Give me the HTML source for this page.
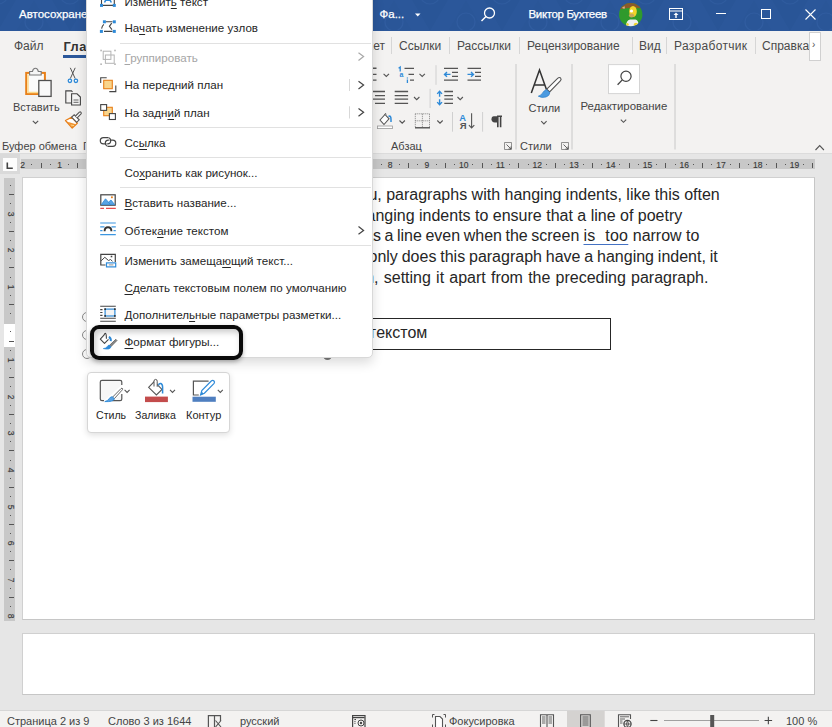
<!DOCTYPE html>
<html><head><meta charset="utf-8">
<style>
*{margin:0;padding:0;box-sizing:border-box}
html,body{width:832px;height:727px;overflow:hidden;background:#e6e6e6;font-family:"Liberation Sans",sans-serif;position:relative}
.a{position:absolute;white-space:nowrap}
#title{left:0;top:0;width:832px;height:30.6px;background:#2b579a;overflow:hidden}
#ribbon{left:0;top:30.6px;width:832px;height:122.4px;background:#f3f2f1}
#rulerband{left:0;top:153px;width:832px;height:25px;background:#e6e6e6;border-top:1px solid #dcdcdc}
.tab{font-size:12px;color:#4a4a4a;top:39px}
.tsep{top:37px;width:1px;height:17px;background:#d6d6d6}
.gsep{top:64px;width:1px;height:85px;background:#c8c8c8}
.glabel{font-size:11px;color:#444;top:140px}
.page{background:#fff;border:1px solid #d0d0d0;border-right-color:#c6c6c6;border-bottom-color:#c6c6c6}
.doc{font-size:16px;color:#262626;left:0;}
#status{left:0;top:710px;width:832px;height:17px;background:#f3f2f1;border-top:1.5px solid #d6d6d6}
.st{font-size:11px;color:#444;top:715px}
#menu{left:86px;top:-12px;width:286.5px;height:369.5px;background:#fff;border:1.5px solid #d8d8d8;border-radius:5px;box-shadow:0 5px 12px rgba(0,0,0,0.14)}
.mi{font-size:11.6px;color:#262626}
.mi u{text-decoration-thickness:1px;text-underline-offset:1.5px}
.msep{left:33px;width:251px;height:1px;background:#e1e1e1}
.chev{left:270px;width:8px;height:8px}
.rn{font-size:8.5px;color:#3a3a3a;line-height:10px;-webkit-text-stroke:0.15px #3a3a3a}
.rd{width:1px;height:1px;background:#555}
.rb{width:1px;height:5px;background:#555}
.rbv{width:5px;height:1px;background:#555}
</style></head><body>

<!-- TITLE BAR -->
<div id="title" class="a">
<svg class="a" style="left:0;top:0" width="832" height="30" viewBox="0 0 832 30">
 <defs>
  <pattern id="hx" x="-20" y="0" width="72" height="62" patternUnits="userSpaceOnUse">
   <path d="M0 0 L18 31 L36 0 Z" fill="#24508f" opacity="0.55"/>
   <path d="M36 31 L54 0 L72 31 Z" fill="#24508f" opacity="0.35"/>
   <circle cx="54" cy="22" r="9" fill="none" stroke="#3a68ad" stroke-width="1.2" opacity="0.6"/>
   <circle cx="18" cy="-6" r="10" fill="none" stroke="#3a68ad" stroke-width="1.2" opacity="0.5"/>
  </pattern>
  <clipPath id="av"><circle cx="630.7" cy="14.6" r="11.7"/></clipPath>
 </defs>
 <rect x="0" y="0" width="832" height="30" fill="url(#hx)" opacity="0.6"/>
 <g clip-path="url(#av)">
  <rect x="618" y="2" width="26" height="26" fill="#2f9a2c"/>
  <path d="M618 2 H644 V9 Q638 7.5 634 8.5 Q626 7 618 10 Z" fill="#8a5a2a"/>
  <path d="M622 8 Q623 6 625 6.5 L624.5 9 Z" fill="#d8b080"/>
  <ellipse cx="633" cy="11.5" rx="3.8" ry="5.5" fill="#f1d42a"/>
  <circle cx="631.5" cy="11" r="1.6" fill="#fff"/>
  <ellipse cx="631.5" cy="15.5" rx="2.6" ry="2" fill="#c8a85a"/>
  <path d="M626 27 Q626 20 630 19.5 H635.5 Q639 20 638.5 27 Z" fill="#f0f0f0"/>
  <ellipse cx="636" cy="24.5" rx="2.2" ry="1.8" fill="#f1d42a"/>
  <ellipse cx="627.5" cy="24.5" rx="1.2" ry="1.5" fill="#f1d42a"/>
 </g>
</svg>
  <div class="a" style="left:19px;top:8px;font-size:11.5px;color:#fff;-webkit-text-stroke:0.25px #fff">Автосохранение</div>
  <div class="a" style="left:379.5px;top:8px;font-size:11.5px;color:#fff;-webkit-text-stroke:0.25px #fff">Фа...</div>
  <svg class="a" style="left:414px;top:12px" width="8" height="6" viewBox="0 0 8 6"><path d="M1 1.5 H6.5 L3.75 4.5 Z" fill="#fff"/></svg>
  <svg class="a" style="left:478px;top:5px" width="20" height="20" viewBox="0 0 20 20"><circle cx="11.5" cy="8" r="5" fill="none" stroke="#fff" stroke-width="1.3"/><line x1="8" y1="11.5" x2="3.5" y2="16" stroke="#fff" stroke-width="1.4"/></svg>
  <div class="a" style="left:528.5px;top:8px;font-size:11.5px;color:#fff;-webkit-text-stroke:0.25px #fff;letter-spacing:-0.35px">Виктор Бухтеев</div>
  <svg class="a" style="left:669px;top:8px" width="14" height="12" viewBox="0 0 14 12"><rect x="0.5" y="0.5" width="13" height="11" fill="none" stroke="#fff"/><line x1="0.5" y1="3" x2="13.5" y2="3" stroke="#fff"/><path d="M7 4.5 L4.5 7 H6.3 V10 H7.7 V7 H9.5Z" fill="#fff"/></svg>
  <div class="a" style="left:716px;top:13px;width:10px;height:1px;background:#fff"></div>
  <div class="a" style="left:761px;top:9px;width:10px;height:10px;border:1px solid #fff"></div>
  <svg class="a" style="left:805px;top:9px" width="11" height="11" viewBox="0 0 11 11"><path d="M0.5 0.5 L10.5 10.5 M10.5 0.5 L0.5 10.5" stroke="#fff" stroke-width="1.1"/></svg>
</div>

<!-- RIBBON -->
<div id="ribbon" class="a"></div>
<div class="a tab" style="left:14px">Файл</div>
<div class="a tab" style="left:63.5px;top:38.6px;font-weight:bold;color:#333;letter-spacing:0.5px;font-size:12.8px">Главная</div>
<div class="a" style="left:63px;top:55px;width:50px;height:3px;background:#2b579a"></div>
<div class="a tab" style="left:351px">Макет</div>
<div class="a tsep" style="left:391px"></div>
<div class="a tab" style="left:399px">Ссылки</div>
<div class="a tsep" style="left:449px"></div>
<div class="a tab" style="left:457px">Рассылки</div>
<div class="a tsep" style="left:519px"></div>
<div class="a tab" style="left:527px">Рецензирование</div>
<div class="a tsep" style="left:632px"></div>
<div class="a tab" style="left:639px">Вид</div>
<div class="a tsep" style="left:666px"></div>
<div class="a tab" style="left:674px;letter-spacing:0.3px">Разработчик</div>
<div class="a tsep" style="left:755px"></div>
<div class="a tab" style="left:762px">Справка</div>
<div class="a" style="left:809px;top:32px;width:12px;height:29px;background:#fff;border:1px solid #d0d0d0"></div>
<div class="a" style="left:812px;top:39px;font-size:10px;color:#555">&#8250;</div>

<div class="a" style="left:13px;top:101px;font-size:11px;color:#444">Вставить</div>
<div class="a" style="left:528.5px;top:101.5px;font-size:11px;color:#444">Стили</div>
<div class="a" style="left:580.5px;top:99.5px;font-size:11.4px;color:#444">Редактирование</div>
<div class="a glabel" style="left:83px">Г</div>
<div class="a glabel" style="left:2px">Буфер обмена</div>
<div class="a glabel" style="left:391px">Абзац</div>
<div class="a glabel" style="left:520px">Стили</div>

<!-- RIBBON ICONS -->
<svg class="a" style="left:0;top:0" width="832" height="160" viewBox="0 0 832 160">
 <g fill="none" stroke-linecap="butt">
  <!-- paste -->
  <rect x="26.2" y="72.9" width="18.7" height="21.1" fill="#fbfbfb" stroke="#e8801a" stroke-width="2"/>
  <path d="M28 74.5 V92.5 H43" stroke="#fcd98a" stroke-width="1.4"/>
  <path d="M29.6 75 V71.5 H32.5 Q33 68.3 35.4 68.3 Q37.8 68.3 38.3 71.5 H41.2 V75 Z" fill="#f6f6f6" stroke="#7a7a7a" stroke-width="1.1"/>
  <rect x="38.8" y="80.5" width="12.3" height="15.9" fill="#f9f9f9" stroke="#505050" stroke-width="1.3"/>
  <!-- scissors -->
  <path d="M70.3 67.8 L75.2 78.6 M75.2 67.8 L70.3 78.6" stroke="#555" stroke-width="1"/>
  <circle cx="69.9" cy="80.8" r="1.7" fill="#fff" stroke="#2e8ad8" stroke-width="1.3"/>
  <circle cx="75.9" cy="80.8" r="1.7" fill="#fff" stroke="#2e8ad8" stroke-width="1.3"/>
  <!-- copy -->
  <path d="M71.5 103 H65.8 V90.9 H71.5 L72.5 92" stroke="#444" stroke-width="1.1"/>
  <path d="M71.6 93.8 H77 L80.4 97 V105 H71.6 Z" fill="#f6f6f6" stroke="#444" stroke-width="1.1"/>
  <path d="M73.5 100 H78.5 M73.5 102.3 H78.5" stroke="#555" stroke-width="0.9"/>
  <!-- format painter -->
  <path d="M65.5 120.5 L71.8 117.2 L77.3 123.2 L72.2 128 Z" fill="#fff" stroke="#e8801a" stroke-width="1.3" stroke-linejoin="round"/>
  <path d="M67.5 121.8 L76 124.2 L72.3 127.3 Z" fill="#f0922e"/>
  <path d="M70.8 125 L74 125.6" stroke="#fcd98a" stroke-width="1"/>
  <path d="M71.6 117.2 L74.2 114.8 L79.2 119.8 L76.7 122.3 Z" fill="#fff" stroke="#555" stroke-width="1.1"/>
  <path d="M75.5 116 L79.4 112.2 Q80.2 111.5 81 112.3 Q81.7 113.1 81 113.9 L77.2 117.8" fill="#fff" stroke="#555" stroke-width="1.1"/>
  <!-- Paragraph row1 -->
  <path d="M372 68.3 H376.5 M372 74.4 H376.5 M372 80.1 H376.5" stroke="#555" stroke-width="1.4"/>
  <path d="M383.6 73.8 L386.3 76.5 L389 73.8" stroke="#555" stroke-width="1.1"/>
  <path d="M398.6 68.2 L400.2 67 V71.6" stroke="#2e8ad8" stroke-width="1.3" fill="none"/>
  <text x="399.6" y="77.2" font-family="Liberation Sans" font-weight="bold" font-size="7" fill="#2e8ad8">a</text>
  <path d="M407.4 79.6 V83 M407.4 77.6 V78.6" stroke="#2e8ad8" stroke-width="1.3"/>
  <path d="M404.5 68.3 H414 M408.5 74.4 H414 M410 80.1 H414" stroke="#555" stroke-width="1.2"/>
  <path d="M419.5 73.8 L422.2 76.5 L424.9 73.8" stroke="#555" stroke-width="1.1"/>
  <path d="M436 65.2 V84.8" stroke="#d0d0d0" stroke-width="1"/>
  <path d="M444 68.3 H458 M452 72.4 H458 M452 76.3 H458 M444 80.1 H458" stroke="#555" stroke-width="1.2"/>
  <path d="M450.5 74.4 H444.5 M447 72 L444.5 74.4 L447 76.8" stroke="#2e8ad8" stroke-width="1.4"/>
  <path d="M467.5 68.3 H481 M475 72.4 H481 M475 76.3 H481 M467.5 80.1 H481" stroke="#555" stroke-width="1.2"/>
  <path d="M467.5 74.4 H473.5 M471 72 L473.5 74.4 L471 76.8" stroke="#2e8ad8" stroke-width="1.4"/>
  <!-- row2 -->
  <path d="M372 91.5 H385 M375 95.6 H385 M372 99.2 H385 M375 103.3 H385" stroke="#555" stroke-width="1.3"/>
  <path d="M394.7 91.5 H408.1 M394.7 95.6 H408.1 M394.7 99.2 H408.1 M394.7 103.3 H408.1" stroke="#555" stroke-width="1.3"/>
  <path d="M414 97 L416.7 99.7 L419.4 97" stroke="#555" stroke-width="1.1"/>
  <path d="M430.1 88.9 V108" stroke="#d0d0d0" stroke-width="1"/>
  <path d="M439.6 91.5 V96.8 M439.6 99.3 V104.5 M437.2 93.9 L439.6 91.3 L442 93.9 M437.2 102.1 L439.6 104.7 L442 102.1" stroke="#2e8ad8" stroke-width="1.4"/>
  <path d="M444.3 91.5 H453 M444.3 95.6 H453 M444.3 99.2 H453 M444.3 103.3 H453" stroke="#555" stroke-width="1.3"/>
  <path d="M457.5 97 L460.2 99.7 L462.9 97" stroke="#555" stroke-width="1.1"/>
  <!-- row3 -->
  <path d="M380 120 L385 114.5 L389 118.8 L384 124.5 Z" fill="#fff" stroke="#555" stroke-width="1.1"/>
  <path d="M384.5 114.5 Q385.5 112.6 386.4 114.2" stroke="#555" stroke-width="1"/>
  <path d="M388.5 116.5 Q391 115 391 119.5 V122" stroke="#2e8ad8" stroke-width="1.5"/>
  <rect x="377.5" y="126" width="15" height="2.6" fill="#fff" stroke="#999" stroke-width="0.8"/>
  <path d="M399.5 120.5 L402.2 123.2 L404.9 120.5" stroke="#555" stroke-width="1.1"/>
  <path d="M415.3 113.8 H429.5 M415.3 113.8 V127.5 M429.5 113.8 V127.5 M422.4 113.8 V127.5 M415.3 120.8 H429.5" stroke="#777" stroke-width="0.9" stroke-dasharray="1 1"/>
  <path d="M415 127.8 H430" stroke="#444" stroke-width="1.3"/>
  <path d="M437.3 120.5 L440 123.2 L442.7 120.5" stroke="#555" stroke-width="1.1"/>
  <path d="M452.5 112 V131.7" stroke="#d0d0d0" stroke-width="1"/>
  <text x="459.3" y="120.5" font-family="Liberation Sans" font-weight="bold" font-size="9.3" fill="#2e8ad8">A</text>
  <text x="459.8" y="128.6" font-family="Liberation Sans" font-weight="bold" font-size="9.5" fill="#555">Я</text>
  <path d="M471.6 113.2 V128 M468.9 125.2 L471.6 128 L474.3 125.2" stroke="#555" stroke-width="1.1"/>
  <path d="M482.6 112 V131.7" stroke="#d0d0d0" stroke-width="1"/>
  <path d="M497.5 116.2 H493.8 Q491.5 116.2 491.5 119.3 Q491.5 122.4 494.8 122.4 H497.5 Z" fill="#444"/><path d="M497.8 116.2 V127.2 M500.6 116.2 V127.2 M497 116.2 H502" stroke="#444" stroke-width="1.6" fill="none"/>
  <path d="M516 64 V149.5 M572 64 V149.5 M675 64 V149.5" stroke="#c8c8c8" stroke-width="1"/>
  <!-- launchers -->
  <path d="M504.5 142.5 H511.5 V149.5 H504.5 Z" stroke="#777" stroke-width="0.8"/>
  <path d="M506.5 144.5 L511 149 M511 146.5 V149 H508.5" stroke="#555" stroke-width="0.9"/>
  <path d="M561.5 142.5 H568.5 V149.5 H561.5 Z" stroke="#777" stroke-width="0.8"/>
  <path d="M563.5 144.5 L568 149 M568 146.5 V149 H565.5" stroke="#555" stroke-width="0.9"/>
  <!-- styles A -->
  <path d="M531.3 93 L539.5 70 L547.7 93 M534 85 H545" stroke="#333" stroke-width="1.5"/>
  <path d="M546.8 89.2 L557.6 78.3 Q559.4 76.8 560.6 78 Q561.8 79.3 560.3 81 L549.6 92 Z" fill="#fff" stroke="#555" stroke-width="1.1"/>
  <path d="M538.3 96.2 Q540.8 95.6 542.2 93.4 Q543.8 90.5 546.5 89.6 L549.9 92.6 Q549.5 96 546 97 Q541.8 98.2 538.3 96.2 Z" fill="#4a9ae0" stroke="#2e7fc8" stroke-width="0.7"/>
  <path d="M541.2 121.2 L543.9 123.9 L546.6 121.2" stroke="#555" stroke-width="1.1"/>
  <!-- editing -->
  <rect x="608.5" y="64.6" width="31" height="29" fill="#fff" stroke="#d4d4d4" stroke-width="1"/>
  <circle cx="626" cy="76.2" r="5.1" stroke="#444" stroke-width="1.2"/>
  <path d="M622.3 79.9 L617.6 84.8" stroke="#444" stroke-width="1.3"/>
  <path d="M620.8 119.6 L623.5 122.3 L626.2 119.6" stroke="#555" stroke-width="1.1"/>
  <path d="M32.8 120.8 L35.5 123.5 L38.2 120.8" stroke="#555" stroke-width="1.1"/>
  <path d="M815.5 150 L819.7 145.5 L823.9 150" stroke="#555" stroke-width="1.1"/>
 </g>
</svg>

<!-- RULER -->
<div id="rulerband" class="a"></div>
<div class="a" style="left:0;top:154.3px;width:20px;height:20px;background:#dadada"></div>
<div class="a" style="left:2.7px;top:158px;width:14px;height:13px;background:#fdfdfd"></div>
<svg class="a" style="left:0;top:150px" width="20" height="25" viewBox="0 150 20 25"><path d="M7.3 162.5 V168.3 H12.8" fill="none" stroke="#444" stroke-width="1.6"/></svg>
<div class="a" style="left:21px;top:159px;width:794px;height:10px;background:#c8c8c8"></div>
<!--HR-->
<div class="a rn" style="left:12.7px;top:159.5px;width:20px;text-align:center">2</div>
<div class="a rd" style="left:31.4px;top:164px"></div>
<div class="a rb" style="left:40.6px;top:163px"></div>
<div class="a rd" style="left:49.8px;top:164px"></div>
<div class="a rn" style="left:49.5px;top:159.5px;width:20px;text-align:center">1</div>
<div class="a rd" style="left:68.1px;top:164px"></div>
<div class="a rb" style="left:77.3px;top:163px"></div>
<div class="a rd" style="left:86.5px;top:164px"></div>
<div class="a rd" style="left:104.9px;top:164px"></div>
<div class="a rb" style="left:114.1px;top:163px"></div>
<div class="a rd" style="left:123.3px;top:164px"></div>
<div class="a rn" style="left:122.9px;top:159.5px;width:20px;text-align:center">1</div>
<div class="a rd" style="left:141.6px;top:164px"></div>
<div class="a rb" style="left:150.8px;top:163px"></div>
<div class="a rd" style="left:160.0px;top:164px"></div>
<div class="a rn" style="left:159.7px;top:159.5px;width:20px;text-align:center">2</div>
<div class="a rd" style="left:178.4px;top:164px"></div>
<div class="a rb" style="left:187.6px;top:163px"></div>
<div class="a rd" style="left:196.8px;top:164px"></div>
<div class="a rn" style="left:196.4px;top:159.5px;width:20px;text-align:center">3</div>
<div class="a rd" style="left:215.1px;top:164px"></div>
<div class="a rb" style="left:224.3px;top:163px"></div>
<div class="a rd" style="left:233.5px;top:164px"></div>
<div class="a rn" style="left:233.2px;top:159.5px;width:20px;text-align:center">4</div>
<div class="a rd" style="left:251.9px;top:164px"></div>
<div class="a rb" style="left:261.1px;top:163px"></div>
<div class="a rd" style="left:270.3px;top:164px"></div>
<div class="a rn" style="left:269.9px;top:159.5px;width:20px;text-align:center">5</div>
<div class="a rd" style="left:288.6px;top:164px"></div>
<div class="a rb" style="left:297.8px;top:163px"></div>
<div class="a rd" style="left:307.0px;top:164px"></div>
<div class="a rn" style="left:306.7px;top:159.5px;width:20px;text-align:center">6</div>
<div class="a rd" style="left:325.4px;top:164px"></div>
<div class="a rb" style="left:334.6px;top:163px"></div>
<div class="a rd" style="left:343.8px;top:164px"></div>
<div class="a rn" style="left:343.4px;top:159.5px;width:20px;text-align:center">7</div>
<div class="a rd" style="left:362.1px;top:164px"></div>
<div class="a rb" style="left:371.3px;top:163px"></div>
<div class="a rd" style="left:380.5px;top:164px"></div>
<div class="a rn" style="left:380.2px;top:159.5px;width:20px;text-align:center">8</div>
<div class="a rd" style="left:398.9px;top:164px"></div>
<div class="a rb" style="left:408.1px;top:163px"></div>
<div class="a rd" style="left:417.3px;top:164px"></div>
<div class="a rn" style="left:416.9px;top:159.5px;width:20px;text-align:center">9</div>
<div class="a rd" style="left:435.6px;top:164px"></div>
<div class="a rb" style="left:444.8px;top:163px"></div>
<div class="a rd" style="left:454.0px;top:164px"></div>
<div class="a rn" style="left:453.7px;top:159.5px;width:20px;text-align:center">10</div>
<div class="a rd" style="left:472.4px;top:164px"></div>
<div class="a rb" style="left:481.6px;top:163px"></div>
<div class="a rd" style="left:490.8px;top:164px"></div>
<div class="a rn" style="left:490.4px;top:159.5px;width:20px;text-align:center">11</div>
<div class="a rd" style="left:509.1px;top:164px"></div>
<div class="a rb" style="left:518.3px;top:163px"></div>
<div class="a rd" style="left:527.5px;top:164px"></div>
<div class="a rn" style="left:527.2px;top:159.5px;width:20px;text-align:center">12</div>
<div class="a rd" style="left:545.9px;top:164px"></div>
<div class="a rb" style="left:555.1px;top:163px"></div>
<div class="a rd" style="left:564.3px;top:164px"></div>
<div class="a rn" style="left:564.0px;top:159.5px;width:20px;text-align:center">13</div>
<div class="a rd" style="left:582.6px;top:164px"></div>
<div class="a rb" style="left:591.8px;top:163px"></div>
<div class="a rd" style="left:601.0px;top:164px"></div>
<div class="a rn" style="left:600.7px;top:159.5px;width:20px;text-align:center">14</div>
<div class="a rd" style="left:619.4px;top:164px"></div>
<div class="a rb" style="left:628.6px;top:163px"></div>
<div class="a rd" style="left:637.8px;top:164px"></div>
<div class="a rn" style="left:637.5px;top:159.5px;width:20px;text-align:center">15</div>
<div class="a rd" style="left:656.1px;top:164px"></div>
<div class="a rb" style="left:665.3px;top:163px"></div>
<div class="a rd" style="left:674.5px;top:164px"></div>
<div class="a rn" style="left:674.2px;top:159.5px;width:20px;text-align:center">16</div>
<div class="a rd" style="left:692.9px;top:164px"></div>
<div class="a rb" style="left:702.1px;top:163px"></div>
<div class="a rd" style="left:711.3px;top:164px"></div>
<div class="a rn" style="left:711.0px;top:159.5px;width:20px;text-align:center">17</div>
<div class="a rd" style="left:729.6px;top:164px"></div>
<div class="a rb" style="left:738.8px;top:163px"></div>
<div class="a rd" style="left:748.0px;top:164px"></div>
<div class="a rn" style="left:747.7px;top:159.5px;width:20px;text-align:center">18</div>
<div class="a rd" style="left:766.4px;top:164px"></div>
<div class="a rb" style="left:775.6px;top:163px"></div>
<div class="a rd" style="left:784.8px;top:164px"></div>
<div class="a rn" style="left:784.5px;top:159.5px;width:20px;text-align:center">19</div>
<div class="a rd" style="left:803.1px;top:164px"></div>
<div class="a rb" style="left:812.3px;top:163px"></div>
<!--/HR-->

<!-- PAGES -->
<div class="a" style="left:4px;top:178px;width:11px;height:443px;background:#c8c8c8"></div>
<div class="a" style="left:4px;top:324px;width:11px;height:23px;background:#fff"></div>
<!--VR-->
<div class="a rd" style="left:10px;top:185.1px"></div>
<div class="a rbv" style="left:9px;top:194.2px"></div>
<div class="a rd" style="left:10px;top:203.4px"></div>
<div class="a rn" style="left:0px;top:207.7px;width:20px;height:12px;text-align:center;transform:rotate(90deg)">3</div>
<div class="a rd" style="left:10px;top:221.7px"></div>
<div class="a rbv" style="left:9px;top:230.8px"></div>
<div class="a rd" style="left:10px;top:239.9px"></div>
<div class="a rn" style="left:0px;top:244.3px;width:20px;height:12px;text-align:center;transform:rotate(90deg)">2</div>
<div class="a rd" style="left:10px;top:258.2px"></div>
<div class="a rbv" style="left:9px;top:267.4px"></div>
<div class="a rd" style="left:10px;top:276.6px"></div>
<div class="a rn" style="left:0px;top:280.9px;width:20px;height:12px;text-align:center;transform:rotate(90deg)">1</div>
<div class="a rd" style="left:10px;top:294.8px"></div>
<div class="a rbv" style="left:9px;top:304.0px"></div>
<div class="a rd" style="left:10px;top:313.1px"></div>
<div class="a rd" style="left:10px;top:331.4px"></div>
<div class="a rbv" style="left:9px;top:340.6px"></div>
<div class="a rd" style="left:10px;top:349.8px"></div>
<div class="a rn" style="left:0px;top:354.1px;width:20px;height:12px;text-align:center;transform:rotate(90deg)">1</div>
<div class="a rd" style="left:10px;top:368.1px"></div>
<div class="a rbv" style="left:9px;top:377.2px"></div>
<div class="a rd" style="left:10px;top:386.4px"></div>
<div class="a rn" style="left:0px;top:390.7px;width:20px;height:12px;text-align:center;transform:rotate(90deg)">2</div>
<div class="a rd" style="left:10px;top:404.6px"></div>
<div class="a rbv" style="left:9px;top:413.8px"></div>
<div class="a rd" style="left:10px;top:422.9px"></div>
<div class="a rn" style="left:0px;top:427.3px;width:20px;height:12px;text-align:center;transform:rotate(90deg)">3</div>
<div class="a rd" style="left:10px;top:441.2px"></div>
<div class="a rbv" style="left:9px;top:450.4px"></div>
<div class="a rd" style="left:10px;top:459.6px"></div>
<div class="a rn" style="left:0px;top:463.9px;width:20px;height:12px;text-align:center;transform:rotate(90deg)">4</div>
<div class="a rd" style="left:10px;top:477.9px"></div>
<div class="a rbv" style="left:9px;top:487.0px"></div>
<div class="a rd" style="left:10px;top:496.2px"></div>
<div class="a rn" style="left:0px;top:500.5px;width:20px;height:12px;text-align:center;transform:rotate(90deg)">5</div>
<div class="a rd" style="left:10px;top:514.5px"></div>
<div class="a rbv" style="left:9px;top:523.6px"></div>
<div class="a rd" style="left:10px;top:532.8px"></div>
<div class="a rn" style="left:0px;top:537.1px;width:20px;height:12px;text-align:center;transform:rotate(90deg)">6</div>
<div class="a rd" style="left:10px;top:551.1px"></div>
<div class="a rbv" style="left:9px;top:560.2px"></div>
<div class="a rd" style="left:10px;top:569.4px"></div>
<div class="a rn" style="left:0px;top:573.7px;width:20px;height:12px;text-align:center;transform:rotate(90deg)">7</div>
<div class="a rd" style="left:10px;top:587.6px"></div>
<div class="a rbv" style="left:9px;top:596.8px"></div>
<div class="a rd" style="left:10px;top:606.0px"></div>
<div class="a rn" style="left:0px;top:610.3px;width:20px;height:12px;text-align:center;transform:rotate(90deg)">8</div>
<!--/VR-->
<div class="a page" style="left:22px;top:177px;width:793px;height:443px"></div>
<div class="a page" style="left:22px;top:633px;width:793px;height:62px"></div>

<!-- DOC TEXT -->
<div class="a doc" style="left:351.5px;top:186.4px">you, paragraphs with hanging indents, like this often</div>
<div class="a doc" style="left:357.6px;top:206.6px">hanging indents to ensure that a line of poetry</div>
<div class="a doc" style="left:364.1px;top:227px;word-spacing:-0.9px">as a line even when the screen</div>
<div class="a doc" style="left:583.5px;top:227px"><span style="text-decoration:underline;text-decoration-color:#4472c4;text-underline-offset:2.5px;letter-spacing:0.3px">is&nbsp; too</span> narrow to</div>
<div class="a doc" style="left:368.5px;top:248.4px;word-spacing:-0.6px">only does this paragraph have a hanging indent, it</div>
<div class="a doc" style="left:325.2px;top:269.1px;word-spacing:0.75px">margin, setting it apart from the preceding paragraph.</div>
<div class="a" style="left:300px;top:317.8px;width:311.2px;height:32px;border:1.5px solid #262626;background:#fff"></div>
<div class="a doc" style="left:300px;top:323.7px;width:76.2px;text-align:right">с т</div>
<div class="a doc" style="left:376.2px;top:323.7px">екстом</div>

<!-- STATUS -->
<div id="status" class="a"></div>
<div class="a st" style="left:7px">Страница 2 из 9</div>
<div class="a st" style="left:108px">Слово 3 из 1644</div>
<div class="a st" style="left:240px">русский</div>
<div class="a st" style="left:449px">Фокусировка</div>
<svg class="a" style="left:0;top:706px" width="832" height="21" viewBox="0 706 832 21">
 <g fill="none">
  <path d="M214.5 727 V715.6 H208.4 V727" stroke="#555" stroke-width="1.2"/>
  <path d="M214.5 715.6 H220.5 V721" stroke="#555" stroke-width="1.2"/>
  <path d="M215.5 720.5 L221 727 M221 720.5 L215.5 727" stroke="#555" stroke-width="1.1"/>
  <rect x="352.6" y="715.6" width="12.4" height="12" stroke="#444" stroke-width="1.2"/>
  <path d="M353 717.6 H364.6" stroke="#444" stroke-width="1.2"/>
  <path d="M354.4 719.5 H356 M354.4 721.4 H355.5 M354.4 723.3 H355.5" stroke="#444" stroke-width="1"/>
  <circle cx="361" cy="723" r="3" fill="#f3f2f1" stroke="#444" stroke-width="1"/>
  <circle cx="361" cy="723" r="1.2" fill="#444"/>
  <path d="M432.5 717.5 V714.5 H434.5 M443.5 714.5 H445.5 V717.5 M432.5 724.5 V727 M445.5 724.5 V727" stroke="#555" stroke-width="1"/>
  <path d="M435.5 727 V716.5 H440 L442.5 719 V727" fill="#fff" stroke="#555" stroke-width="1.1"/>
  <rect x="567" y="710.8" width="37.7" height="17" fill="#d4d2d0"/>
  <path d="M540.5 727 V714.7 H546.5 L547 715.5 L547.5 714.7 H553.5 V727 M547 715.5 V727" stroke="#555" stroke-width="1.1"/>
  <path d="M542 717 H545.5 M542 719 H545.5 M542 721 H545.5 M542 723 H545.5 M548.5 717 H552 M548.5 719 H552 M548.5 721 H552 M548.5 723 H552" stroke="#555" stroke-width="0.9"/>
  <path d="M580.6 727 V714.8 H590.3 V727" stroke="#555" stroke-width="1.1"/>
  <path d="M582.5 717 H588.5 M582.5 719 H588.5 M582.5 721 H588.5 M582.5 723 H588.5 M582.5 725 H588.5" stroke="#555" stroke-width="0.9"/>
  <path d="M618.5 727 V714.8 H630.5 V719" stroke="#555" stroke-width="1.1"/>
  <path d="M620 716.8 H629 M620 719 H625 M620 721 H622.5 M620 723 H622.5" stroke="#555" stroke-width="0.9"/>
  <circle cx="627.5" cy="724" r="3.6" fill="#f3f2f1" stroke="#444" stroke-width="1.2"/>
  <path d="M623.9 724 H631.1 M627.5 720.4 Q625.5 724 627.5 727.6 Q629.5 724 627.5 720.4" stroke="#444" stroke-width="0.8"/>
  <path d="M650.3 720.5 H657.5" stroke="#444" stroke-width="1.1"/>
  <path d="M664 720.5 H759" stroke="#a0a0a0" stroke-width="1"/>
  <rect x="710.2" y="715" width="4" height="12" fill="#555"/>
  <path d="M764.6 720.5 H772.1 M768.35 716.8 V724.2" stroke="#444" stroke-width="1.1"/>
 </g>
</svg>
<div class="a st" style="left:786px">100 %</div>

<!-- HANDLES -->
<div class="a" style="left:82px;top:312px;width:10px;height:10px;border-radius:50%;border:1.2px solid #8c8c8c;background:#fff"></div>
<div class="a" style="left:82px;top:330.4px;width:10px;height:10px;border-radius:50%;border:1.2px solid #8c8c8c;background:#fff"></div>
<div class="a" style="left:82px;top:348.8px;width:10px;height:10px;border-radius:50%;border:1.2px solid #8c8c8c;background:#fff"></div>
<div class="a" style="left:322.5px;top:350.5px;width:9px;height:9px;border-radius:50%;background:#7a7a7a"></div>
<!-- MINI TOOLBAR -->
<div class="a" style="left:87px;top:372px;width:143px;height:61px;background:#fff;border:1px solid #d6d6d6;border-radius:4px;box-shadow:0 2px 6px rgba(0,0,0,0.13)"></div>
<div class="a" style="left:96px;top:409px;font-size:10.6px;color:#262626">Стиль</div>
<div class="a" style="left:135px;top:409px;font-size:10.6px;color:#262626">Заливка</div>
<div class="a" style="left:186px;top:409px;font-size:11px;color:#262626">Контур</div>

<svg class="a" style="left:0;top:370px" width="240" height="40" viewBox="0 370 240 40">
 <g fill="none">
  <path d="M121.8 385 V382 Q121.8 380.3 120.1 380.3 H102 Q100.3 380.3 100.3 382 V399 Q100.3 400.7 102 400.7 H104 M112 400.7 H120.1 Q121.8 400.7 121.8 399 V394" fill="#f7f7f7" stroke="#555" stroke-width="1.2"/>
  <path d="M112.5 397.2 L121 388.6 Q122.2 387.6 122.6 388.6 Q122.9 389.4 122 390.2 L114.2 398.8 Z" fill="#fff" stroke="#555" stroke-width="0.9"/>
  <path d="M104.8 401.6 Q107.8 401 109.3 398.5 Q110.8 396 112.5 397.1 L114.3 398.8 Q113.5 402 104.8 401.6 Z" fill="#5ba2e2" stroke="#2e8ad8" stroke-width="0.9"/>
  <path d="M124.6 389.9 L127.1 392.4 L129.6 389.9" stroke="#555" stroke-width="1.1"/>
  <path d="M148.6 387.3 L154.2 381.6 L162 389.4 L156.4 395 Z" fill="#fff" stroke="#555" stroke-width="1.1"/>
  <path d="M154 386.5 V381.2 Q154 379.4 155.6 379.4 Q157.2 379.4 157.2 381.2 V386.8" fill="#fff" stroke="#555" stroke-width="1"/>
  <path d="M158.5 385.3 Q159 383.2 160.8 383.5 Q162.5 384 162.6 387 V393.6" stroke="#2e8ad8" stroke-width="1.5"/>
  <rect x="145" y="396.6" width="22.9" height="5.5" fill="#c34c4c"/>
  <path d="M170 389.9 L172.5 392.4 L175 389.9" stroke="#555" stroke-width="1.1"/>
  <path d="M208.6 381.2 H193.4 V395 H198.8" stroke="#555" stroke-width="1.2"/>
  <path d="M200.6 395 L201.8 390.5 L211.5 380.8 Q212.8 379.8 214 381 Q215 382.2 214.1 383.4 L204.4 393.2 Z" fill="#fff" stroke="#2e8ad8" stroke-width="1.2"/>
  <path d="M200.6 395 L201.6 391.5 L203.8 393.7 Z" fill="#2e8ad8"/>
  <rect x="192.5" y="396.7" width="23.3" height="5.1" fill="#4f7fc0"/>
  <path d="M217.8 389.9 L220.3 392.4 L222.8 389.9" stroke="#555" stroke-width="1.1"/>
 </g>
</svg>

<!-- CONTEXT MENU -->
<div id="menu" class="a"></div>
<!--MENUITEMS-->
<div class="a mi" style="left:124.5px;top:-5.1px">Изменит<u>ь</u> текст</div>
<div class="a mi" style="left:124.5px;top:20.9px">На<u>ч</u>ать изменение узлов</div>
<div class="a mi" style="left:124.5px;top:51.1px;color:#a6a6a6"><u>Г</u>руппировать</div>
<div class="a mi" style="left:124.5px;top:78.4px">На передний план</div>
<div class="a mi" style="left:124.5px;top:105.9px">На задн<u>и</u>й план</div>
<div class="a mi" style="left:124.5px;top:136.4px">Сс<u>ы</u>лка</div>
<div class="a mi" style="left:124.5px;top:166.4px">Со<u>х</u>ранить как рисунок...</div>
<div class="a mi" style="left:124.5px;top:196.4px"><u>В</u>ставить название...</div>
<div class="a mi" style="left:124.5px;top:223.8px">Обтек<u>а</u>ние текстом</div>
<div class="a mi" style="left:124.5px;top:254.1px">Изменить замеща<u>ю</u>щий текст...</div>
<div class="a mi" style="left:124.5px;top:281.0px"><u>С</u>делать текстовым полем по умолчанию</div>
<div class="a mi" style="left:124.5px;top:307.9px">Дополнител<u>ь</u>ные параметры разметки...</div>
<div class="a mi" style="left:124.5px;top:334.9px"><u>Ф</u>ормат фигуры...</div>
<div class="a msep" style="left:120px;top:42.8px;width:251px"></div>
<div class="a msep" style="left:120px;top:126.9px;width:251px"></div>
<div class="a msep" style="left:120px;top:157.2px;width:251px"></div>
<div class="a msep" style="left:120px;top:187.1px;width:251px"></div>
<div class="a msep" style="left:120px;top:244.8px;width:251px"></div>
<!--/MENUITEMS-->
<!-- MENU ICONS -->
<svg class="a" style="left:0;top:0" width="380" height="360" viewBox="0 0 380 360">
 <g fill="none">
  <!-- edit text -->
  <path d="M101.5 -2 V5.4 H114.3 V-2" stroke="#444" stroke-width="1.1"/>
  <path d="M104.5 2.5 L107.9 -4 L111.3 2.5 M105.6 0.3 H110.2" stroke="#2e8ad8" stroke-width="1.6"/>
  <rect x="100" y="3.9" width="3" height="3" fill="#2e8ad8"/>
  <rect x="112.8" y="3.9" width="3" height="3" fill="#2e8ad8"/>
  <!-- edit points -->
  <path d="M106 21.8 H112.5 M104 31.4 H112.5" stroke="#444" stroke-width="1.1"/>
  <path d="M103.8 24.3 Q102 26 101.6 28.6" stroke="#444" stroke-width="1.1"/>
  <path d="M111.7 23.2 L109.4 26.3 L112 29.6" stroke="#444" stroke-width="1.1"/>
  <rect x="102.9" y="20.3" width="3" height="3" fill="#2e8ad8"/>
  <rect x="112.8" y="20.3" width="3" height="3" fill="#2e8ad8"/>
  <rect x="99.9" y="29.9" width="3" height="3" fill="#2e8ad8"/>
  <rect x="112.8" y="29.9" width="3" height="3" fill="#2e8ad8"/>
  <!-- group (disabled) -->
  <g stroke="#b4b4b4" stroke-width="1">
   <rect x="103.2" y="51.2" width="7.7" height="8.2"/>
   <rect x="105.4" y="55" width="8.8" height="8.3"/>
  </g>
  <g fill="#b4b4b4">
   <rect x="100.3" y="49.7" width="1.6" height="1.6"/><rect x="114.2" y="49.7" width="1.6" height="1.6"/>
   <rect x="100.3" y="63.4" width="1.6" height="1.6"/><rect x="114.2" y="63.4" width="1.6" height="1.6"/>
  </g>
  <!-- bring forward -->
  <path d="M106.7 77.7 H100.7 V83" stroke="#444" stroke-width="1.1"/>
  <rect x="103.7" y="80.3" width="8.6" height="8.4" fill="#f9d58c" stroke="#e8801a" stroke-width="1.1"/>
  <path d="M115.8 85.5 V91.6 H109.3" stroke="#444" stroke-width="1.1"/>
  <!-- send backward -->
  <rect x="103.7" y="107.3" width="8.6" height="8.4" fill="#f9d58c" stroke="#e8801a" stroke-width="1.1"/>
  <rect x="100.7" y="104.6" width="5.9" height="5.8" fill="#fff" stroke="#444" stroke-width="1.1"/>
  <rect x="109.4" y="113.6" width="6" height="5.9" fill="#fff" stroke="#444" stroke-width="1.1"/>
  <!-- link -->
  <path d="M108.6 137.6 H103.5 Q100.3 137.6 100.3 140.7 Q100.3 143.8 103.5 143.8 H106.5" stroke="#444" stroke-width="1.2"/>
  <path d="M107.2 143.8 H107.6 Q110.7 143.8 110.7 140.7 Q110.7 138.5 108.8 137.8" stroke="#444" stroke-width="1.2"/>
  <path d="M107.5 146.4 H112.7 Q115.8 146.4 115.8 143.3 Q115.8 140.2 112.7 140.2 H109.6" stroke="#444" stroke-width="1.2"/>
  <path d="M108.9 140.2 H108.4 Q105.3 140.2 105.3 143.3 Q105.3 145.5 107.3 146.2" stroke="#444" stroke-width="1.2"/>
  <!-- insert caption -->
  <rect x="100.8" y="194.8" width="14.4" height="10.4" fill="#fff" stroke="#444" stroke-width="1.2"/>
  <path d="M101.4 204.6 L105.5 198.8 L110.5 204.6 Z" fill="#5aa3e3" stroke="#2e8ad8" stroke-width="0.8"/>
  <path d="M108.5 202.2 L111 200 L114.6 204.6 H110.5 Z" fill="#5aa3e3" stroke="#2e8ad8" stroke-width="0.8"/>
  <rect x="111" y="196.4" width="1.8" height="1.8" fill="#e8801a"/>
  <path d="M100.3 208.3 H104 M106 208.3 H115.8" stroke="#e84c4c" stroke-width="1.2"/>
  <!-- wrap text -->
  <path d="M100.2 223 H115.8 M100.2 234.7 H115.8 M100.2 226.8 H104.5 M111.5 226.8 H115.8 M100.2 230.7 H102.5 M113.5 230.7 H115.8" stroke="#3c96e0" stroke-width="1.2"/>
  <path d="M104.6 231.3 Q104.6 227.2 108 227.2 Q111.4 227.2 111.4 231.3" stroke="#333" stroke-width="1.9"/>
  <!-- alt text -->
  <path d="M105.5 265 H100.8 V254.3 H115.3 V262" stroke="#444" stroke-width="1.2"/>
  <path d="M101.2 260.8 L104.8 257.3 L108.5 260.5 L110.5 259.5 L112.5 261.3" stroke="#444" stroke-width="1"/>
  <rect x="110.7" y="255.7" width="1.6" height="1.6" fill="#444"/>
  <rect x="106.5" y="262.9" width="9.2" height="4" fill="#fff" stroke="#2e8ad8" stroke-width="1.2"/>
  <path d="M108.8 264.9 H113.4" stroke="#888" stroke-width="0.9"/>
  <!-- layout options -->
  <path d="M100.2 306.3 H115.8 M100.2 318.3 H115.8 M100.2 321.2 H115.8 M100.2 309.6 H102.5 M100.2 312.5 H102.5 M100.2 315.4 H102.5" stroke="#444" stroke-width="1.1"/>
  <rect x="105.1" y="309.1" width="9.8" height="6.9" fill="#f4f4f4" stroke="#2e8ad8" stroke-width="1.2"/>
  <g fill="#333"><rect x="104.3" y="308.3" width="1.7" height="1.7"/><rect x="114" y="308.3" width="1.7" height="1.7"/><rect x="104.3" y="315.1" width="1.7" height="1.7"/><rect x="114" y="315.1" width="1.7" height="1.7"/></g>
  <!-- format shape -->
  <path d="M104.2 334.8 L100.3 339.1 L104.5 343.3 L108.5 339.4" fill="#fff" stroke="#444" stroke-width="1.1" stroke-linejoin="round"/>
  <path d="M104.2 334.8 Q104.8 333 105.6 333.4 Q106.4 334 106.4 338.8" stroke="#444" stroke-width="1.1"/>
  <path d="M108.8 337 Q111.3 338 110.8 341.2" stroke="#2e8ad8" stroke-width="1.9"/>
  <path d="M109.3 345.5 L115.8 339.3 L117 340.5 L110.8 346.8 Z" fill="#888" stroke="#555" stroke-width="0.7"/>
  <path d="M103.3 348.6 Q106 348.4 107.3 346.6 Q108.6 344.6 109.6 345.3 L111 346.8 Q110.2 350.2 103.3 348.6 Z" fill="#2e8ad8" stroke="#2e8ad8" stroke-width="0.7"/>
  <!-- chevrons -->
  <path d="M358.5 52.8 L363.6 56.6 L358.5 60.5" stroke="#a8a8a8" stroke-width="1.2"/>
  <path d="M358.5 81.3 L363.6 85.1 L358.5 89" stroke="#444" stroke-width="1.2"/>
  <path d="M358.5 108.4 L363.6 112.3 L358.5 116.2" stroke="#444" stroke-width="1.2"/>
  <path d="M358.5 226.5 L363.6 230.4 L358.5 234.3" stroke="#444" stroke-width="1.2"/>
  <path d="M349.5 79 V91 M349.5 106.3 V118.5" stroke="#d8d8d8" stroke-width="1"/>
 </g>
</svg>

<div class="a" style="left:89.7px;top:324.5px;width:153px;height:35px;border:4px solid #0a0a0a;border-radius:9px;box-shadow:inset 2px 3px 6px rgba(0,0,0,0.22),0 2px 4px rgba(0,0,0,0.3)"></div>

</body></html>
